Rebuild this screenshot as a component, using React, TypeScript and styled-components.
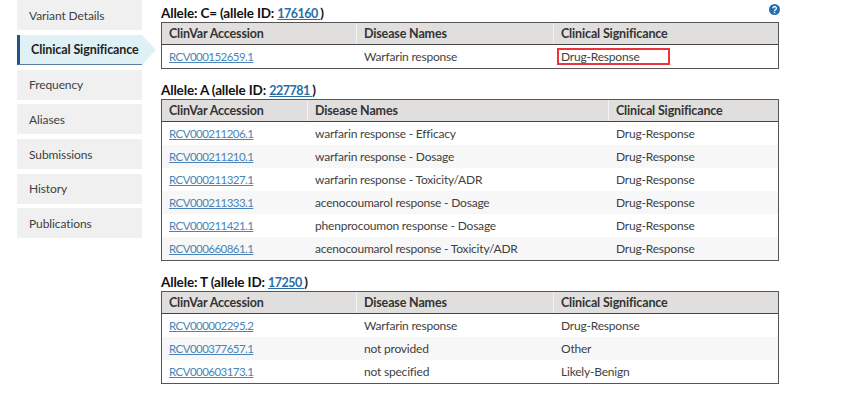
import React from "react";
import styled, { createGlobalStyle } from "styled-components";

const GlobalStyle = createGlobalStyle`
  html, body {
    margin: 0;
    padding: 0;
    background: #fff;
    font-family: "Lato", "Liberation Sans", sans-serif;
    color: #333;
  }
`;

const Page = styled.div`
  display: flex;
  width: 865px;
  height: 414px;
  overflow: hidden;
  background: #fff;
  padding-left: 17px;
  box-sizing: border-box;
`;

const Sidebar = styled.nav`
  display: flex;
  flex-direction: column;
  gap: 4.7px;
  width: 125px;
  margin-right: 19px;
  padding-top: 0.3px;
`;

const NavItem = styled.div<{ $active?: boolean }>`
  position: relative;
  height: 30px;
  box-sizing: border-box;
  display: flex;
  align-items: center;
  font-size: ${(p) => (p.$active ? "12.5px" : "12px")};
  letter-spacing: -0.1px;
  background: ${(p) => (p.$active ? "#e0f1f6" : "#f0f0f0")};
  color: ${(p) => (p.$active ? "#222" : "#3f3f3f")};
  font-weight: ${(p) => (p.$active ? 700 : 400)};
  padding-left: ${(p) => (p.$active ? "11px" : "12px")};
  border-left: ${(p) => (p.$active ? "3px solid #20558a" : "none")};
  border-bottom: ${(p) => (p.$active ? "1px solid #5d7ea0" : "none")};

  ${(p) =>
    p.$active &&
    `&::after {
      content: "";
      position: absolute;
      left: 122px;
      top: 0;
      border-top: 15px solid transparent;
      border-bottom: 15px solid transparent;
      border-left: 14px solid #e0f1f6;
    }`}
`;

const Content = styled.main`
  position: relative;
  width: 618px;
  padding-top: 4px;
`;

const HelpIcon = styled.svg`
  position: absolute;
  left: 608px;
  top: 4px;
  width: 11px;
  height: 11px;
`;

const Section = styled.section`
  margin-bottom: 12px;
`;

const AlleleTitle = styled.h3`
  margin: 0;
  height: 18px;
  line-height: 18px;
  font-size: 13.5px;
  font-weight: 700;
  letter-spacing: -0.15px;
  color: #111;
`;

const AlleleLink = styled.a`
  color: #2a6ea8;
  text-decoration: underline;
  font-size: 12.5px;
  letter-spacing: -0.5px;
`;

const TableBox = styled.div`
  border: 1px solid #555;
  box-sizing: border-box;
  font-size: 12px;
  letter-spacing: -0.2px;
`;

const Row = styled.div<{ $cols: string; $shade?: boolean }>`
  display: grid;
  grid-template-columns: ${(p) => p.$cols};
  height: 23px;
  align-items: center;
  background: ${(p) => (p.$shade ? "#f7f7f7" : "#fff")};
`;

const HeadRow = styled(Row)`
  height: 22px;
  background: #e0dfde;
  border-bottom: 1px solid #444;
  box-sizing: border-box;
`;

const HeadCell = styled.div`
  height: 100%;
  display: flex;
  align-items: center;
  padding-left: 7px;
  font-size: 12.5px;
  font-weight: 700;
  letter-spacing: -0.15px;
  color: #333;
  border-left: 1px solid #f2f2f2;

  &:first-child {
    border-left: none;
  }
`;

const Cell = styled.div`
  padding-left: 8px;
  color: #3f3f3f;
  position: relative;

  &:first-child {
    padding-left: 7px;
  }
`;

const Accession = styled.a`
  color: #4a84b8;
  text-decoration: underline;
  font-size: 11.5px;
  letter-spacing: -0.55px;
`;

const Highlight = styled.span`
  position: absolute;
  left: 4px;
  top: -1px;
  width: 113px;
  height: 17px;
  border: 2px solid #ee3338;
  box-sizing: border-box;
`;

type Allele = {
  label: string;
  id: string;
  cols: string;
  rows: [string, string, string][];
  marked?: boolean;
};

const alleles: Allele[] = [
  {
    label: "C=",
    id: "176160",
    cols: "194px 197px 1fr",
    marked: true,
    rows: [["RCV000152659.1", "Warfarin response", "Drug-Response"]],
  },
  {
    label: "A",
    id: "227781",
    cols: "145px 301px 1fr",
    rows: [
      ["RCV000211206.1", "warfarin response - Efficacy", "Drug-Response"],
      ["RCV000211210.1", "warfarin response - Dosage", "Drug-Response"],
      ["RCV000211327.1", "warfarin response - Toxicity/ADR", "Drug-Response"],
      ["RCV000211333.1", "acenocoumarol response - Dosage", "Drug-Response"],
      ["RCV000211421.1", "phenprocoumon response - Dosage", "Drug-Response"],
      ["RCV000660861.1", "acenocoumarol response - Toxicity/ADR", "Drug-Response"],
    ],
  },
  {
    label: "T",
    id: "17250",
    cols: "194px 197px 1fr",
    rows: [
      ["RCV000002295.2", "Warfarin response", "Drug-Response"],
      ["RCV000377657.1", "not provided", "Other"],
      ["RCV000603173.1", "not specified", "Likely-Benign"],
    ],
  },
];

const navItems = [
  "Variant Details",
  "Clinical Significance",
  "Frequency",
  "Aliases",
  "Submissions",
  "History",
  "Publications",
];

const App: React.FC = () => {
  return (
    <Page>
      <GlobalStyle />
      <Sidebar>
        {navItems.map((name) => (
          <NavItem key={name} $active={name === "Clinical Significance"}>
            {name}
          </NavItem>
        ))}
      </Sidebar>
      <Content>
        <HelpIcon viewBox="0 0 12 12">
          <circle cx="6" cy="6" r="6" fill="#1f6fb0" />
          <path
            d="M4.2 4.7a1.9 1.9 0 1 1 2.9 1.6c-.7.4-1.1.7-1.1 1.4"
            fill="none"
            stroke="#fff"
            strokeWidth="1.5"
          />
          <rect x="5.2" y="8.4" width="1.6" height="1.6" fill="#fff" />
        </HelpIcon>
        {alleles.map((a) => (
          <Section key={a.label}>
            <AlleleTitle>
              Allele: {a.label} (allele ID: <AlleleLink href="#">{a.id} </AlleleLink>)
            </AlleleTitle>
            <TableBox>
              <HeadRow $cols={a.cols}>
                <HeadCell>ClinVar Accession</HeadCell>
                <HeadCell>Disease Names</HeadCell>
                <HeadCell>Clinical Significance</HeadCell>
              </HeadRow>
              {a.rows.map((r, i) => (
                <Row key={r[0]} $cols={a.cols} $shade={i % 2 === 1}>
                  <Cell>
                    <Accession href="#">{r[0]}</Accession>
                  </Cell>
                  <Cell>{r[1]}</Cell>
                  <Cell>
                    {a.marked && <Highlight />}
                    {r[2]}
                  </Cell>
                </Row>
              ))}
            </TableBox>
          </Section>
        ))}
      </Content>
    </Page>
  );
};

export default App;
